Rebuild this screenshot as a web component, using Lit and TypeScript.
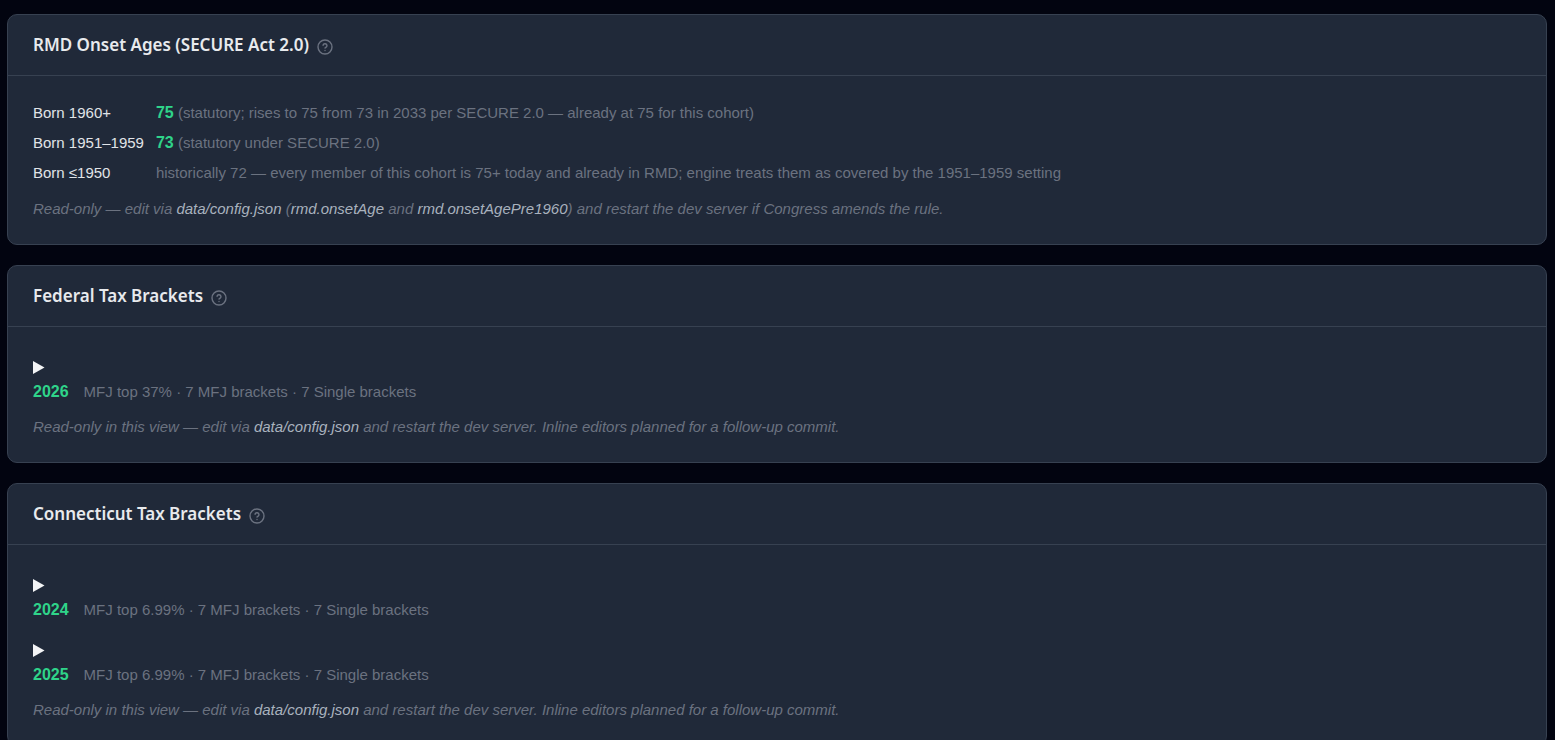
import { LitElement, html, css, type TemplateResult } from "lit";
import { customElement, property } from "lit/decorators.js";

interface Bracket {
  year: number;
  summary: string;
}

const FEDERAL: Bracket[] = [
  { year: 2026, summary: "MFJ top 37% · 7 MFJ brackets · 7 Single brackets" },
];

const CONNECTICUT: Bracket[] = [
  { year: 2024, summary: "MFJ top 6.99% · 7 MFJ brackets · 7 Single brackets" },
  { year: 2025, summary: "MFJ top 6.99% · 7 MFJ brackets · 7 Single brackets" },
];

@customElement("settings-card")
export class SettingsCard extends LitElement {
  @property() heading = "";

  static styles = css`
    :host {
      display: block;
      border: 1px solid #374151;
      border-radius: 10px;
      background: #202939;
    }
    .header {
      display: flex;
      align-items: center;
      gap: 8px;
      padding: 18px 25px;
      border-bottom: 1px solid #374151;
    }
    .title {
      margin: 0;
      font-family: "Noto Sans", sans-serif;
      font-size: 17px;
      font-weight: 600;
      line-height: 24px;
      color: #e8eaed;
    }
    .help {
      display: flex;
      padding: 3px 0 0;
      border: 0;
      background: none;
      color: #6b7280;
      cursor: help;
    }
    .body {
      padding: 24px 25px;
    }
  `;

  render() {
    return html`
      <div class="header">
        <h2 class="title">${this.heading}</h2>
        <button class="help" type="button" aria-label=${`About ${this.heading}`}>
          <svg width="16" height="16" viewBox="0 0 16 16" fill="none" stroke="currentColor" stroke-width="1.4" stroke-linecap="round" stroke-linejoin="round">
            <circle cx="8" cy="8" r="7"></circle>
            <path d="M6 6.2a2.05 2.05 0 0 1 4 .6c0 1.35-2 1.9-2 2.3"></path>
            <path d="M8 11.5h.01"></path>
          </svg>
        </button>
      </div>
      <div class="body"><slot></slot></div>
    `;
  }
}

@customElement("app-root")
export class AppRoot extends LitElement {
  static styles = css`
    :host {
      display: block;
      box-sizing: border-box;
      min-height: 100vh;
      padding: 14px 8px 20px 7px;
      background: #020410;
      font-family: "Liberation Sans", Arial, sans-serif;
      font-size: 15px;
      line-height: 26px;
      color: #6b7280;
    }
    .cards {
      display: grid;
      gap: 20px;
    }
    .ages {
      display: grid;
      grid-template-columns: max-content 1fr;
      gap: 4px 12px;
      margin: 0;
    }
    .cohort {
      color: #e1e4e8;
    }
    .rule {
      margin: 0;
    }
    .value {
      font-size: 16px;
      font-weight: 700;
      line-height: 24px;
      color: #2fd48a;
    }
    .note {
      margin: 12px 0 0;
      font-style: italic;
      line-height: 22px;
    }
    .code {
      font-style: italic;
      color: #a9b2be;
    }
    .bracket {
      padding: 4px 0 7px;
    }
    .bracket + .bracket {
      margin-top: 4px;
    }
    .bracket + .note {
      margin-top: 4px;
    }
    .summary {
      display: block;
      cursor: pointer;
    }
    .marker {
      display: flex;
      align-items: center;
      height: 24px;
      color: #f3f4f6;
    }
    .line {
      display: flex;
      align-items: baseline;
      gap: 15px;
    }
  `;

  private brackets(items: Bracket[]): TemplateResult {
    return html`
      ${items.map(
        (b) => html`
          <details class="bracket">
            <summary class="summary">
              <span class="marker">
                <svg width="12" height="13" viewBox="0 0 12 13" fill="currentColor" aria-hidden="true">
                  <path d="M0 0 11.5 6.5 0 13z"></path>
                </svg>
              </span>
              <span class="line"><span class="value">${b.year}</span><span>${b.summary}</span></span>
            </summary>
          </details>
        `
      )}
      <p class="note">
        Read-only in this view — edit via <span class="code">data/config.json</span> and restart the
        dev server. Inline editors planned for a follow-up commit.
      </p>
    `;
  }

  render() {
    return html`
      <main class="cards">
        <settings-card heading="RMD Onset Ages (SECURE Act 2.0)">
          <dl class="ages">
            <dt class="cohort">Born 1960+</dt>
            <dd class="rule">
              <span class="value">75</span> (statutory; rises to 75 from 73 in 2033 per SECURE 2.0 —
              already at 75 for this cohort)
            </dd>
            <dt class="cohort">Born 1951–1959</dt>
            <dd class="rule"><span class="value">73</span> (statutory under SECURE 2.0)</dd>
            <dt class="cohort">Born ≤1950</dt>
            <dd class="rule">
              historically 72 — every member of this cohort is 75+ today and already in RMD; engine
              treats them as covered by the 1951–1959 setting
            </dd>
          </dl>
          <p class="note">
            Read-only — edit via <span class="code">data/config.json</span> (<span class="code">rmd.onsetAge</span>
            and <span class="code">rmd.onsetAgePre1960</span>) and restart the dev server if Congress
            amends the rule.
          </p>
        </settings-card>
        <settings-card heading="Federal Tax Brackets">${this.brackets(FEDERAL)}</settings-card>
        <settings-card heading="Connecticut Tax Brackets">${this.brackets(CONNECTICUT)}</settings-card>
      </main>
    `;
  }
}
